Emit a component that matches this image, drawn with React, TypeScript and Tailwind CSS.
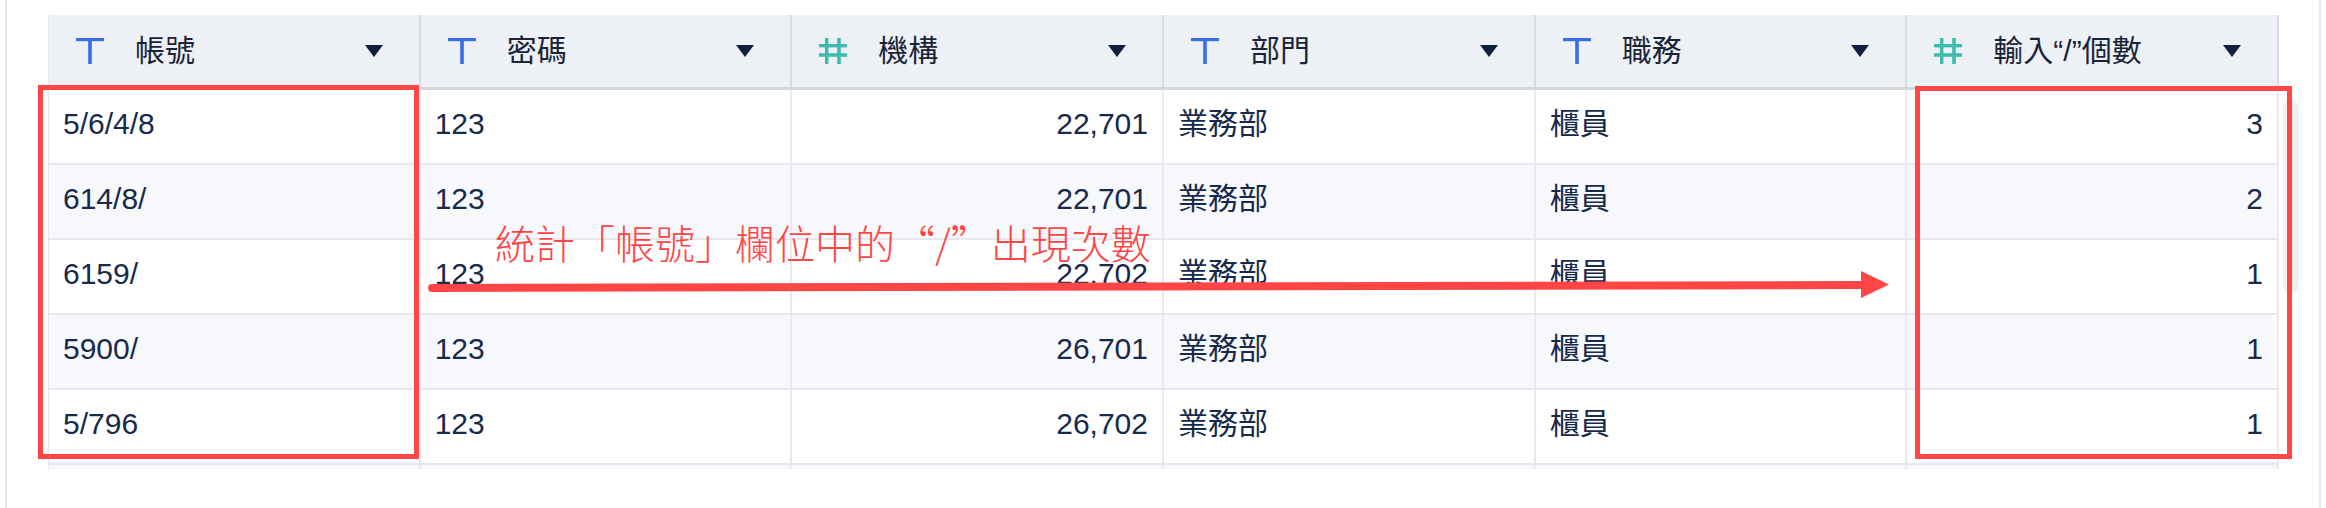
import React from "react";

type Col = { name: string; kind: "text" | "num" };

const columns: Col[] = [
  { name: "帳號", kind: "text" },
  { name: "密碼", kind: "text" },
  { name: "機構", kind: "num" },
  { name: "部門", kind: "text" },
  { name: "職務", kind: "text" },
  { name: "輸入“/”個數", kind: "num" },
];

const rows: string[][] = [
  ["5/6/4/8", "123", "22,701", "業務部", "櫃員", "3"],
  ["614/8/", "123", "22,701", "業務部", "櫃員", "2"],
  ["6159/", "123", "22,702", "業務部", "櫃員", "1"],
  ["5900/", "123", "26,701", "業務部", "櫃員", "1"],
  ["5/796", "123", "26,702", "業務部", "櫃員", "1"],
];

function TextIcon() {
  return (
    <svg width="28" height="26" viewBox="0 0 28 26" className="shrink-0">
      <rect x="0" y="0" width="28" height="3.2" fill="#3b6de6" />
      <rect x="12.2" y="0" width="3.6" height="26" fill="#3b6de6" />
    </svg>
  );
}

function NumIcon() {
  return (
    <svg width="28" height="26" viewBox="0 0 28 26" className="shrink-0">
      <rect x="6" y="0" width="3.4" height="26" fill="#3dbcae" />
      <rect x="18.2" y="0" width="3.6" height="26" fill="#3dbcae" />
      <rect x="0" y="6" width="28" height="3.4" fill="#3dbcae" />
      <rect x="0" y="15.2" width="28" height="3.6" fill="#3dbcae" />
    </svg>
  );
}

function SortCaret() {
  return (
    <svg width="18" height="12" viewBox="0 0 18 12" className="ml-auto shrink-0">
      <polygon points="0,0 18,0 9,12" fill="#0e1f3f" />
    </svg>
  );
}

export default function App() {
  return (
    <div className="relative w-[2326px] h-[508px] overflow-hidden bg-white font-['Liberation_Sans','Noto_Sans_CJK_TC',sans-serif]">
      <div className="relative ml-[5px] w-[2316px] h-full border-x-2 border-[#e6e8ed] pt-[15px] pl-[41px]">
        {/* Table */}
        <div className="w-[2231px] h-[454px] overflow-hidden border-l border-[#e3e6ec]">
          {/* Header */}
          <div className="grid grid-cols-6 h-[75px] bg-[#edf0f5] border-b-[3px] border-[#d3d7de]">
            {columns.map((c) => (
              <div key={c.name} className="flex items-center pl-[27px] pr-[36px] border-r-2 border-[#d8dbe1]">
                {c.kind === "text" ? <TextIcon /> : <NumIcon />}
                <span className="ml-[31px] text-[30px] leading-none text-[#1a2438] whitespace-nowrap">{c.name}</span>
                <SortCaret />
              </div>
            ))}
          </div>

          {/* Rows */}
          {rows.map((r, i) => (
            <div
              key={i}
              className={`grid grid-cols-6 h-[75px] border-b-2 border-[#e6e8ee] ${i % 2 === 1 ? "bg-[#f7f8fb]" : "bg-white"}`}
            >
              {r.map((v, j) => (
                <div
                  key={j}
                  className={`flex items-center px-[14px] pb-[5px] border-r-2 border-[#e8eaef] text-[30px] leading-none text-[#172a4b] ${
                    columns[j].kind === "num" ? "justify-end" : "justify-start"
                  }`}
                >
                  {v}
                </div>
              ))}
            </div>
          ))}
          <div className="grid grid-cols-6 h-[75px] bg-[#f7f8fb]">
            {columns.map((c) => (
              <div key={c.name} className="border-r-2 border-[#e8eaef]" />
            ))}
          </div>
        </div>

        {/* scrollbar thumb */}
        <div className="absolute left-[2276px] top-[100px] w-[16px] h-[193px] rounded-full bg-[#eef0f3]" />
      </div>

      {/* Annotation overlay */}
      <div className="absolute left-[38px] top-[85px] w-[381px] h-[374px] border-[5px] border-[#ff4545]" />
      <div className="absolute left-[1915px] top-[86px] w-[377px] h-[373px] border-[5px] border-[#ff4545]" />

      <div className="absolute left-[495px] top-[222px] text-[40px] leading-none text-[#ff4545] font-['Noto_Sans_CJK_TC',sans-serif] font-light whitespace-nowrap">
        統計「帳號」欄位中的<span className="inline-block w-[40px] text-right">“</span>/<span className="inline-block w-[40px] text-left">”</span>出現次數
      </div>

      <svg className="absolute left-0 top-0 pointer-events-none" width="2326" height="508" viewBox="0 0 2326 508">
        <line x1="432" y1="288" x2="1864" y2="285" stroke="#ff4545" strokeWidth="8" strokeLinecap="round" />
        <polygon points="1861,271 1889,284.5 1861,298" fill="#ff4545" />
      </svg>
    </div>
  );
}
